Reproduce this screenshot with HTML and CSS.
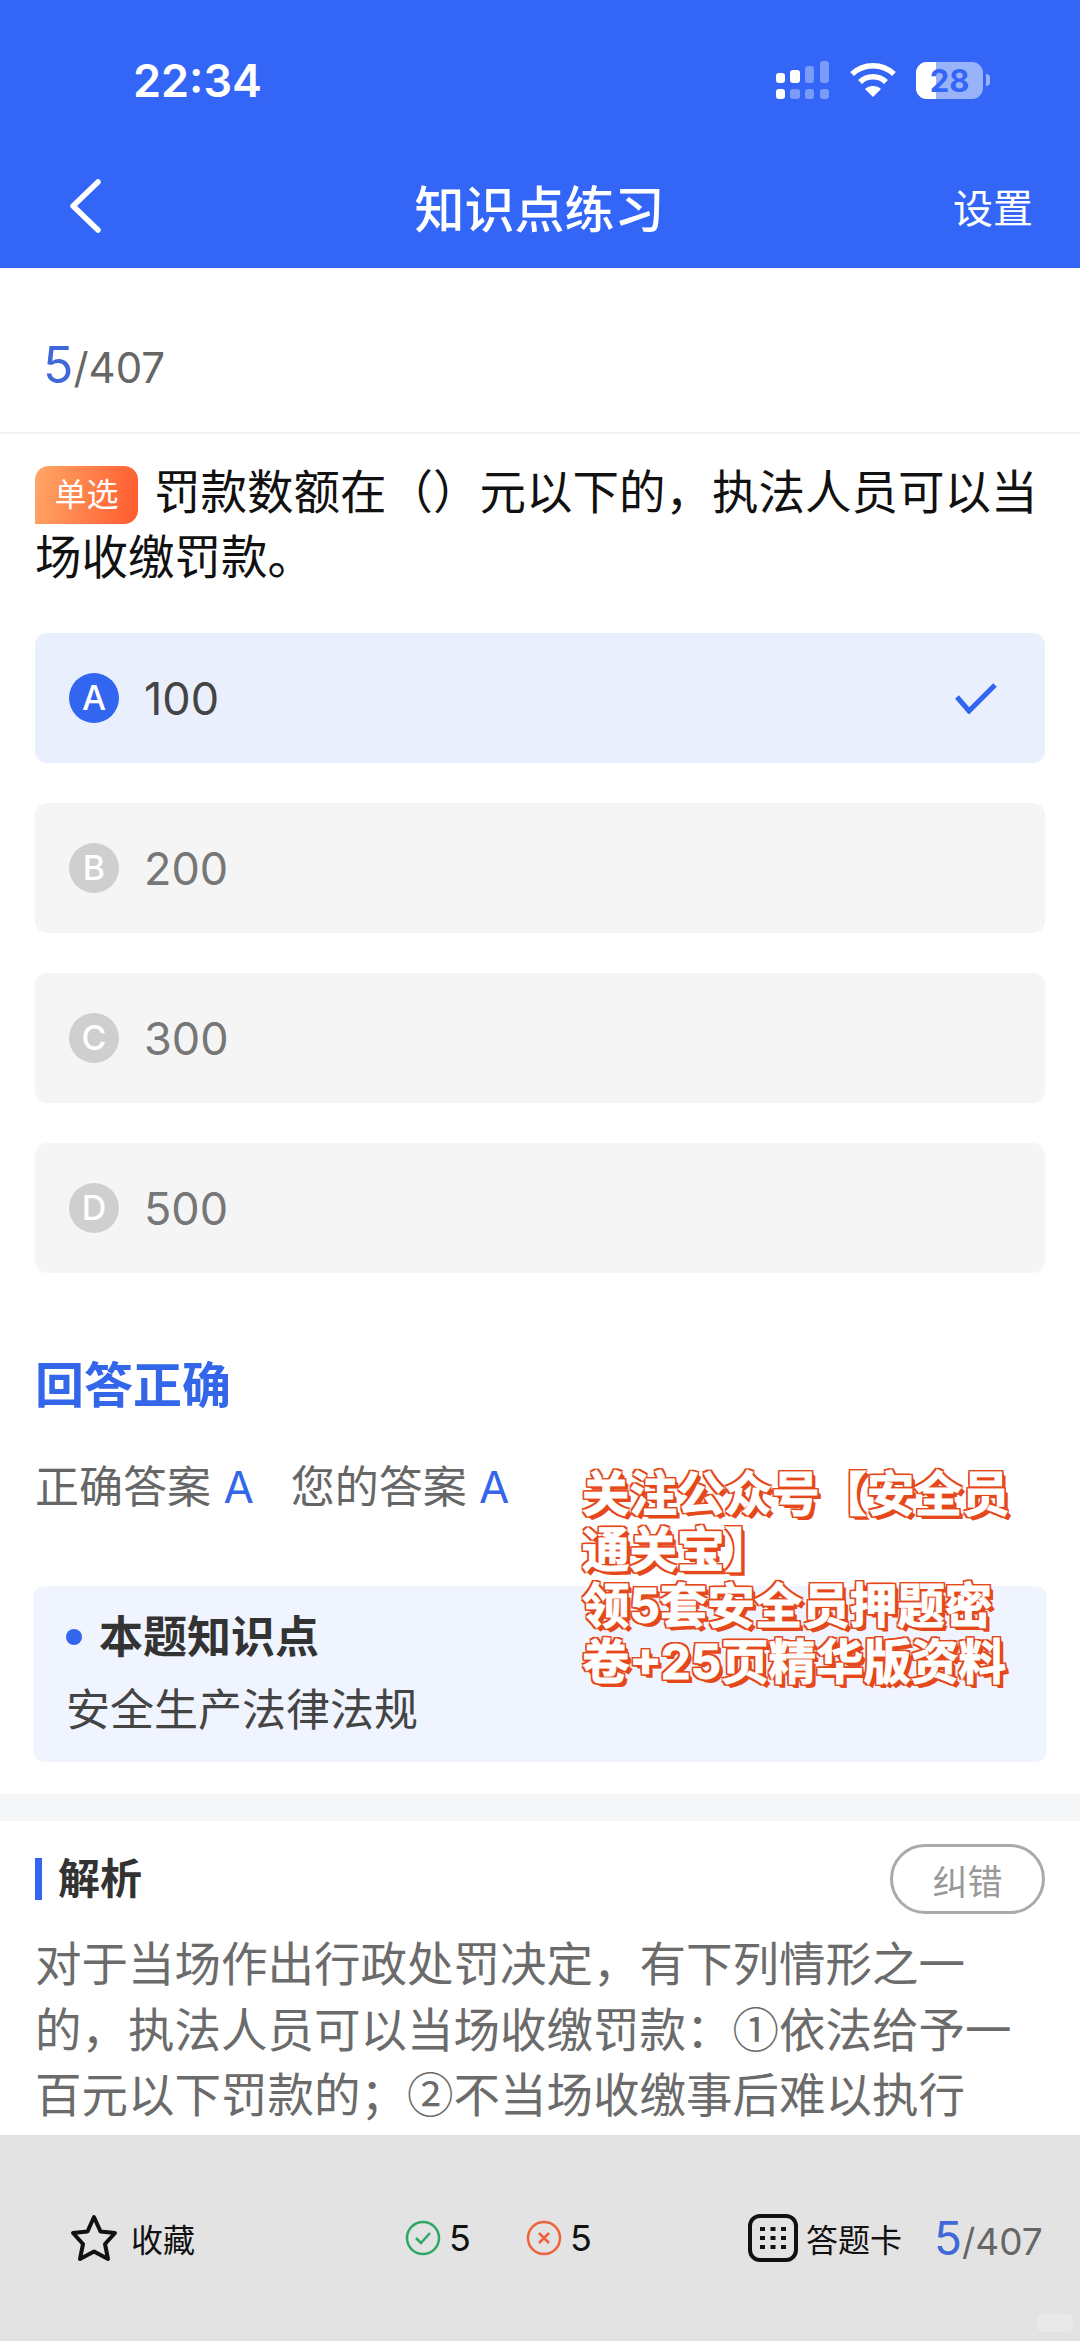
FILE: index.html
```html
<!DOCTYPE html>
<html lang="zh-CN">
<head>
    <meta charset="UTF-8">
    <meta name="viewport" content="width=device-width, initial-scale=1.0">
    <title>知识点练习</title>
    <link rel="stylesheet" href="styles.css">
</head>
<body>
    <div class="page">
        <header class="top-bar">
            <div class="status-row">
                <span class="time">22:34</span>
                <div class="status-icons">
                    <svg class="signal" width="54" height="38" viewBox="0 0 54 38">
                        <g fill="#fff">
                            <rect x="0" y="12" width="9" height="10" rx="3"/>
                            <rect x="14" y="9" width="10" height="13" rx="3"/>
                            <rect x="0" y="28" width="9" height="10" rx="3"/>
                        </g>
                        <g fill="#fff" opacity=".35">
                            <rect x="29" y="5" width="9" height="17" rx="3"/>
                            <rect x="44" y="0" width="9" height="22" rx="3"/>
                            <rect x="14" y="28" width="10" height="10" rx="3"/>
                            <rect x="29" y="28" width="9" height="10" rx="3"/>
                            <rect x="44" y="28" width="9" height="10" rx="3"/>
                        </g>
                    </svg>
                    <svg class="wifi" width="48" height="36" viewBox="0 0 48 36">
                        <g fill="none" stroke="#fff" stroke-width="5.5">
                            <path d="M3 12 C15 1 33 1 45 12"/>
                            <path d="M11 20 C18 13 30 13 37 20"/>
                        </g>
                        <path d="M16 27 C20 23 28 23 32 27 L24 35 Z" fill="#fff"/>
                    </svg>
                    <div class="battery">
                        <div class="battery-fill"></div>
                        <span class="battery-num">28</span>
                    </div>
                    <span class="battery-nub"></span>
                </div>
            </div>
            <nav class="nav-row">
                <svg class="back" width="34" height="54" viewBox="0 0 34 54">
                    <path d="M30 3 L5 27 L30 51" fill="none" stroke="#fff" stroke-width="5.5" stroke-linecap="round" stroke-linejoin="round"/>
                </svg>
                <span class="nav-title">知识点练习</span>
                <span class="nav-link">设置</span>
            </nav>
        </header>

        <main class="content">
            <div class="counter"><span class="cur">5</span><span class="total">/407</span></div>

            <p class="question"><span class="tag">单选</span>罚款数额在（）元以下的，执法人员可以当场收缴罚款。</p>

            <div class="options">
                <div class="option selected">
                    <span class="letter">A</span>
                    <span class="opt-text">100</span>
                    <svg class="check" width="44" height="32" viewBox="0 0 44 32">
                        <path d="M3 15 L15 29 L41 3" fill="none" stroke="#3366f0" stroke-width="5"/>
                    </svg>
                </div>
                <div class="option">
                    <span class="letter">B</span>
                    <span class="opt-text">200</span>
                </div>
                <div class="option">
                    <span class="letter">C</span>
                    <span class="opt-text">300</span>
                </div>
                <div class="option">
                    <span class="letter">D</span>
                    <span class="opt-text">500</span>
                </div>
            </div>

            <h2 class="result">回答正确</h2>
            <div class="answers">
                <span>正确答案 <em>A</em></span>
                <span>您的答案 <em>A</em></span>
            </div>

            <section class="point-card">
                <h3><i class="dot"></i>本题知识点</h3>
                <p>安全生产法律法规</p>
            </section>

            <div class="band"></div>

            <div class="analysis-head">
                <h3>解析</h3>
                <button class="report">纠错</button>
            </div>
            <p class="analysis">对于当场作出行政处罚决定，有下列情形之一的，执法人员可以当场收缴罚款：①依法给予一百元以下罚款的；②不当场收缴事后难以执行</p>
        </main>

        <footer class="bottom-bar">
            <div class="fav">
                <svg width="48" height="48" viewBox="0 0 48 48">
                    <path d="M24 3 L30.5 17.5 L45 19 L35 30 L38 45 L24 37.5 L10 45 L13 30 L3 19 L17.5 17.5 Z" fill="none" stroke="#111" stroke-width="4" stroke-linejoin="round"/>
                </svg>
                <span>收藏</span>
            </div>
            <div class="tally">
                <div class="tally-item">
                    <svg width="36" height="36" viewBox="0 0 36 36">
                        <circle cx="18" cy="18" r="16" fill="none" stroke="#2ea866" stroke-width="2.5"/>
                        <path d="M11 18 L16 23 L25 13" fill="none" stroke="#2ea866" stroke-width="2.5"/>
                    </svg>
                    <span>5</span>
                </div>
                <div class="tally-item">
                    <svg width="36" height="36" viewBox="0 0 36 36">
                        <circle cx="18" cy="18" r="16" fill="none" stroke="#f0603c" stroke-width="2.5"/>
                        <path d="M13 13 L23 23 M23 13 L13 23" fill="none" stroke="#f0603c" stroke-width="2.5"/>
                    </svg>
                    <span>5</span>
                </div>
            </div>
            <div class="card-link">
                <svg width="50" height="48" viewBox="0 0 50 48">
                    <rect x="2" y="2" width="46" height="44" rx="10" fill="none" stroke="#111" stroke-width="4"/>
                    <g fill="#111">
                        <rect x="12" y="13" width="5" height="4"/><rect x="22.5" y="13" width="5" height="4"/><rect x="33" y="13" width="5" height="4"/>
                        <rect x="12" y="22" width="5" height="4"/><rect x="22.5" y="22" width="5" height="4"/><rect x="33" y="22" width="5" height="4"/>
                        <rect x="12" y="31" width="5" height="4"/><rect x="22.5" y="31" width="5" height="4"/><rect x="33" y="31" width="5" height="4"/>
                    </g>
                </svg>
                <span>答题卡</span>
            </div>
            <div class="counter small"><span class="cur">5</span><span class="total">/407</span></div>
        </footer>

        <div class="corner-mark"></div>
        <div class="promo">关注公众号【安全员<br>通关宝】<br>领5套安全员押题密<br>卷+25页精华版资料</div>
    </div>
</body>
</html>
```

FILE: styles.css
```css
* {
    box-sizing: border-box;
}

body {
    margin: 0;
    background: #fff;
    font-family: Inter, "Noto Sans CJK SC", sans-serif;
    color: #111;
}

.page {
    position: relative;
    display: flex;
    flex-direction: column;
    height: 2341px;
    overflow: hidden;
}

/* header */
.top-bar {
    height: 268px;
    background-color: #3366f6;
    color: #fff;
}
.status-row {
    display: flex;
    align-items: center;
    justify-content: space-between;
    height: 160px;
    padding: 0 90px 0 133px;
}
.time {
    font-size: 45px;
    font-weight: 600;
}
.status-icons {
    display: flex;
    align-items: center;
}
.wifi {
    margin: 0 19px 0 19px;
}
.battery {
    position: relative;
    width: 67px;
    height: 37px;
    border-radius: 11px;
    overflow: hidden;
    background-color: rgba(255, 255, 255, .5);
}
.battery-fill {
    width: 20px;
    height: 100%;
    background-color: #fff;
}
.battery-num {
    position: absolute;
    top: 0;
    left: 0;
    width: 100%;
    line-height: 37px;
    text-align: center;
    font-size: 31px;
    font-weight: 700;
    color: #3366f6;
}
.battery-nub {
    width: 4px;
    height: 12px;
    margin-left: 3px;
    border-radius: 0 4px 4px 0;
    background-color: rgba(255, 255, 255, .5);
}
.nav-row {
    display: flex;
    align-items: center;
    justify-content: space-between;
    height: 92px;
    padding: 0 47px 0 68px;
}
.nav-title {
    margin-left: 24px;
    font-size: 50px;
    font-weight: 500;
}
.nav-link {
    font-size: 40px;
}

/* progress */
.content {
    flex: 1;
    min-height: 0;
    overflow: hidden;
}
.counter {
    display: flex;
    align-items: baseline;
    height: 166px;
    padding: 67px 0 0 43px;
    border-bottom: 2px solid #f3f3f3;
}
.cur {
    font-size: 50px;
    color: #3f68d8;
}
.total {
    font-size: 42px;
    color: #666;
}

/* question */
.question {
    margin: 26px 0 43px;
    padding: 0 30px 0 35px;
    font-size: 46.5px;
    line-height: 65px;
}
.tag {
    display: inline-block;
    width: 103px;
    height: 58px;
    margin-right: 16px;
    border-radius: 14px 14px 14px 0;
    background: linear-gradient(100deg, #ffa766, #ff5a2e);
    color: #fff;
    font-size: 32px;
    line-height: 58px;
    text-align: center;
    vertical-align: 3px;
}

/* options */
.options {
    display: flex;
    flex-direction: column;
    gap: 40px;
    padding: 0 35px;
}
.option {
    display: flex;
    align-items: center;
    gap: 25px;
    height: 130px;
    padding: 0 47px 0 34px;
    border-radius: 12px;
    background-color: #f5f5f5;
    color: #777;
    font-size: 45px;
}
.option.selected {
    background-color: #e9effd;
    color: #444;
}
.letter {
    width: 50px;
    height: 50px;
    border-radius: 50%;
    background-color: #cfcfcf;
    color: #fff;
    font-size: 34px;
    font-weight: 500;
    line-height: 50px;
    text-align: center;
}
.selected .letter {
    background-color: #3366f0;
}
.check {
    margin-left: auto;
}

/* result */
.result {
    margin: 83px 35px 0;
    font-size: 49px;
    font-weight: 700;
    line-height: 60px;
    color: #3366e8;
}
.answers {
    display: flex;
    gap: 37px;
    margin: 41px 35px 0;
    font-size: 44px;
    line-height: 60px;
    color: #666;
}
.answers em {
    font-style: normal;
    color: #3366e8;
}
.point-card {
    margin: 69px 33px 0;
    padding: 28px 33px 29px;
    border-radius: 12px;
    background-color: #f0f4fe;
}
.point-card h3 {
    display: flex;
    align-items: center;
    gap: 17px;
    margin: 0;
    font-size: 44px;
    font-weight: 700;
    line-height: 46px;
    color: #333;
}
.point-card p {
    margin: 27px 0 0;
    font-size: 44px;
    line-height: 46px;
    color: #444;
}
.dot {
    width: 16px;
    height: 16px;
    border-radius: 50%;
    background-color: #3366f0;
}
.band {
    height: 27px;
    margin-top: 32px;
    background-color: #f4f6f7;
}

/* analysis */
.analysis-head {
    display: flex;
    align-items: center;
    justify-content: space-between;
    height: 70px;
    margin: 23px 35px 0;
}
.analysis-head h3 {
    margin: 0;
    padding-left: 16px;
    border-left: 7px solid #3366f0;
    font-size: 42px;
    font-weight: 700;
    line-height: 42px;
    color: #333;
}
.report {
    width: 155px;
    height: 70px;
    padding: 0;
    border: 3px solid #aaa;
    border-radius: 35px;
    background: none;
    font-family: inherit;
    font-size: 35px;
    color: #999;
}
.analysis {
    margin: 14px 30px 0 35px;
    font-family: "Noto Sans CJK SC", sans-serif;
    font-size: 46.5px;
    line-height: 65.5px;
    color: #6b6b6b;
}

/* bottom bar */
.bottom-bar {
    display: flex;
    align-items: center;
    flex-shrink: 0;
    height: 206px;
    padding: 0 40px 0 70px;
    background-color: #e3e3e3;
    font-size: 32px;
    white-space: nowrap;
}
.fav, .card-link, .tally-item {
    display: flex;
    align-items: center;
    flex-shrink: 0;
}
.fav {
    gap: 13px;
    width: 335px;
}
.tally {
    display: flex;
    flex-shrink: 0;
    gap: 55px;
    width: 343px;
}
.tally-item {
    gap: 8px;
    font-size: 36px;
}
.card-link {
    gap: 8px;
}
.counter.small {
    height: auto;
    margin-left: 32px;
    padding: 0;
    border: none;
}
.small .cur {
    font-size: 46px;
}
.small .total {
    font-size: 37px;
}
.corner-mark {
    position: absolute;
    top: 2314px;
    left: 1037px;
    width: 36px;
    height: 18px;
    border-radius: 6px;
    background-color: #e9e9e9;
}

/* promo text pasted over the screenshot */
.promo {
    position: absolute;
    top: 1466px;
    left: 582px;
    font-size: 47.5px;
    font-weight: 700;
    line-height: 56px;
    white-space: nowrap;
    color: #fff;
    -webkit-text-stroke: 1px #fff;
    text-shadow:
        -2px 0 0 #e5481a, 2px 0 0 #e5481a, 0 -2px 0 #e5481a, 0 2px 0 #e5481a,
        -2px -2px 0 #e5481a, 2px -2px 0 #e5481a, -2px 2px 0 #e5481a, 2px 2px 0 #e5481a,
        3px 3px 0 #e5481a, 4px 4px 0 #e5481a;
}
```
